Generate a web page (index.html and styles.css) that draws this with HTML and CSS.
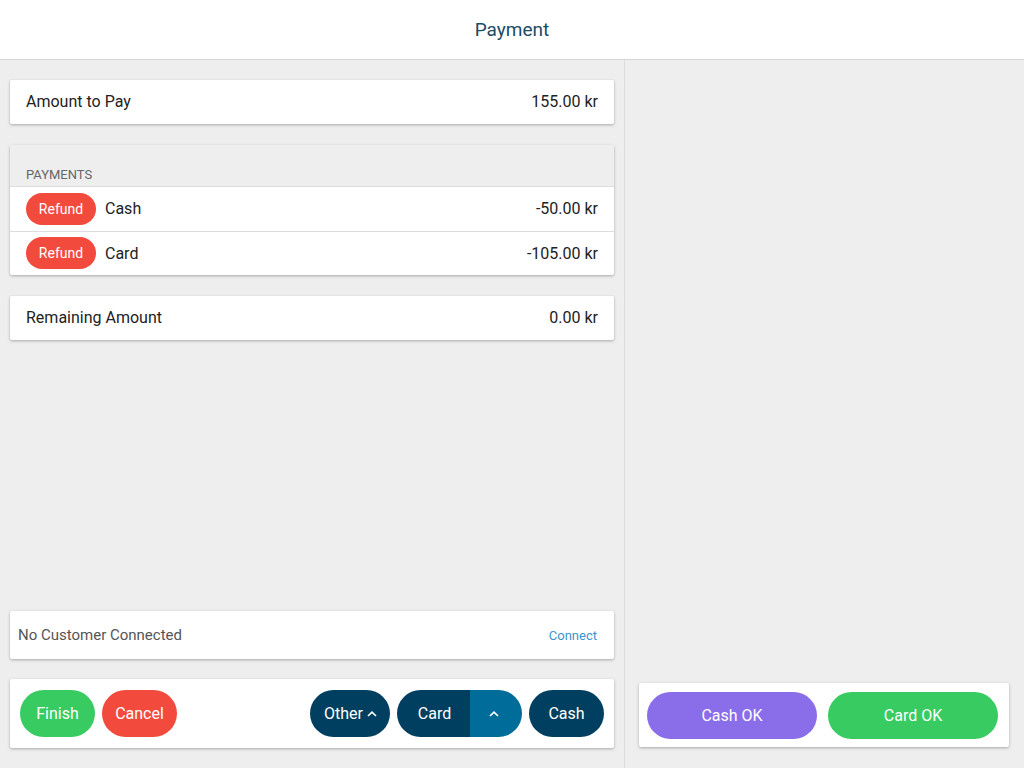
FILE: index.html
```html
<!DOCTYPE html>
<html lang="en">
<head>
    <meta charset="UTF-8">
    <meta name="viewport" content="width=device-width, initial-scale=1.0">
    <title>Payment</title>
    <link rel="stylesheet" href="styles.css">
</head>
<body>
    <div class="app">
        <header class="topbar">Payment</header>
        <div class="main">
            <div class="left">
                <div class="card row">
                    <span>Amount to Pay</span>
                    <span>155.00 kr</span>
                </div>

                <div class="card payments">
                    <div class="payments-head">PAYMENTS</div>
                    <div class="pay-row">
                        <button class="pill refund">Refund</button>
                        <span class="pay-name">Cash</span>
                        <span class="pay-amount">-50.00 kr</span>
                    </div>
                    <div class="pay-row">
                        <button class="pill refund">Refund</button>
                        <span class="pay-name">Card</span>
                        <span class="pay-amount">-105.00 kr</span>
                    </div>
                </div>

                <div class="card row">
                    <span>Remaining Amount</span>
                    <span>0.00 kr</span>
                </div>

                <div class="spacer"></div>

                <div class="card customer">
                    <span>No Customer Connected</span>
                    <a class="connect" href="#">Connect</a>
                </div>

                <div class="card actions">
                    <button class="btn green">Finish</button>
                    <button class="btn red">Cancel</button>
                    <div class="spacer"></div>
                    <button class="btn navy other">Other
                        <svg width="12" height="12" viewBox="0 0 12 12"><path d="M2 8 L6 4.2 L10 8" fill="none" stroke="#fff" stroke-width="1.7"/></svg>
                    </button>
                    <div class="split">
                        <button class="split-main">Card</button>
                        <button class="split-arrow">
                            <svg width="12" height="12" viewBox="0 0 12 12"><path d="M2 8 L6 4.2 L10 8" fill="none" stroke="#fff" stroke-width="1.7"/></svg>
                        </button>
                    </div>
                    <button class="btn navy">Cash</button>
                </div>
            </div>

            <div class="right">
                <div class="card ok-bar">
                    <button class="btn wide purple">Cash OK</button>
                    <button class="btn wide green">Card OK</button>
                </div>
            </div>
        </div>
    </div>
</body>
</html>
```

FILE: styles.css
```css
* {
    margin: 0;
    padding: 0;
    box-sizing: border-box;
    font-family: Roboto, "Liberation Sans", sans-serif;
}

body {
    background-color: #eeeeee;
    color: #222;
}

.app {
    height: 100vh;
    display: flex;
    flex-direction: column;
}

.topbar {
    height: 60px;
    flex-shrink: 0;
    background-color: white;
    border-bottom: 1px solid #d4d4d4;
    display: flex;
    align-items: center;
    justify-content: center;
    font-size: 19px;
    color: #1b4c65;
    padding-bottom: 1px;
}

.main {
    flex: 1;
    display: flex;
    min-height: 0;
}

.left {
    width: 625px;
    border-right: 1px solid #dcdcdc;
    padding: 20px 10px 20px 10px;
    display: flex;
    flex-direction: column;
    gap: 21px;
}

.right {
    flex: 1;
    display: flex;
    flex-direction: column;
    justify-content: flex-end;
    padding: 0 15px 21px 14px;
}

.spacer {
    flex: 1;
}

.card {
    background-color: white;
    border-radius: 2px;
    box-shadow: 0 1px 3px rgba(0, 0, 0, 0.3);
}

.row {
    height: 44px;
    display: flex;
    align-items: center;
    justify-content: space-between;
    padding: 0 16px 2px 16px;
    font-size: 16px;
}

.payments {
    overflow: hidden;
}

.payments-head {
    height: 42px;
    background-color: #eeeeee;
    border-bottom: 1px solid #dddddd;
    font-size: 13px;
    color: #666;
    display: flex;
    align-items: flex-end;
    padding: 0 16px 4px 16px;
}

.pay-row {
    height: 44px;
    display: flex;
    align-items: center;
    padding: 0 16px 1px 16px;
    font-size: 16px;
}

.pay-row + .pay-row {
    border-top: 1px solid #dddddd;
}

.pay-name {
    margin-left: 9px;
    flex: 1;
}

button {
    border: none;
    cursor: pointer;
    color: white;
}

.pill {
    height: 32px;
    width: 70px;
    border-radius: 16px;
    font-size: 14px;
}

.refund {
    background-color: #f24a3d;
}

.customer {
    height: 48px;
    margin-bottom: -1px;
    display: flex;
    align-items: center;
    justify-content: space-between;
    padding: 0 17px 0 8px;
    font-size: 15px;
    color: #555;
}

.connect {
    font-size: 13px;
    color: #3b95cf;
    text-decoration: none;
}

.actions {
    display: flex;
    align-items: center;
    gap: 7px;
    padding: 11px 10px;
}

.btn {
    height: 47px;
    width: 75px;
    border-radius: 24px;
    font-size: 16px;
}

.green {
    background-color: #37cb61;
}

.red {
    background-color: #f24a3d;
}

.navy {
    background-color: #003f5f;
}

.other {
    width: 80px;
    display: flex;
    align-items: center;
    justify-content: center;
    gap: 3px;
    padding-left: 2px;
}

.split {
    display: flex;
    height: 47px;
    border-radius: 24px;
    overflow: hidden;
}

.split-main {
    width: 73px;
    background-color: #003f5f;
    font-size: 16px;
    padding-left: 2px;
}

.split-arrow {
    width: 52px;
    background-color: #006c9a;
    display: flex;
    align-items: center;
    justify-content: center;
    padding-right: 4px;
}

.ok-bar {
    display: flex;
    gap: 11px;
    padding: 9px 11px 8px 8px;
}

.wide {
    width: 170px;
}

.purple {
    background-color: #8a6de8;
}
```
